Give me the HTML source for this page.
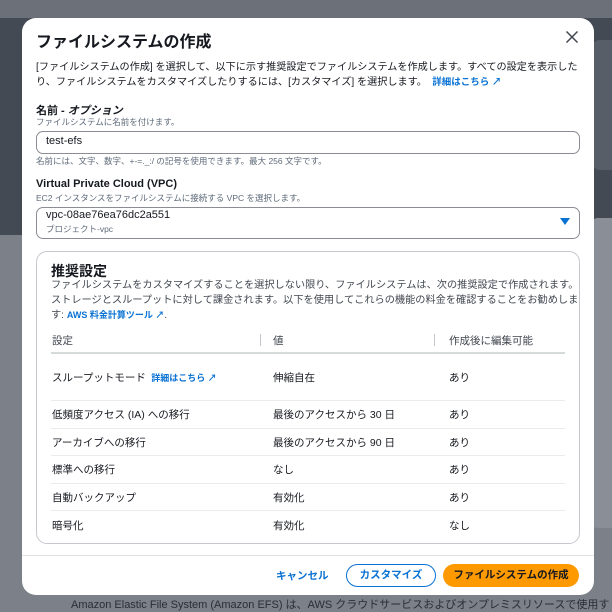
<!DOCTYPE html>
<html><head><meta charset="utf-8"><style>
*{margin:0;padding:0;box-sizing:border-box}
body{width:612px;height:610px;overflow:hidden;position:relative;background:#7b8089;font-family:"Liberation Sans","Noto Sans CJK JP",sans-serif;color:#16191f}
.a{position:absolute;white-space:nowrap}
.bgtop{position:absolute;left:0;top:0;width:612px;height:18px;background:#6c7079}
.bgdark{position:absolute;left:0;top:18px;width:612px;height:217px;background:#444a53}
.rc{position:absolute;background:#8a8f97;border-radius:8px}
.modal{position:absolute;left:22px;top:18px;width:572px;height:577px;background:#fff;border-radius:14px}
.lk{color:#0972d3;font-weight:bold}
.inp{position:absolute;border:1px solid #8c8c94;border-radius:7px;background:#fff}
.card{position:absolute;left:36px;top:251px;width:544px;height:293px;border:1px solid #c6c6cd;border-radius:11px}
.row{position:absolute;left:51px;width:514px;border-top:1px solid #e9ebed}
.t{font-size:10.5px}
</style></head><body>
<div class="bgtop"></div><div class="bgdark"></div>
<div class="rc" style="left:592px;top:40px;width:30px;height:130px;background:#585e67"></div>
<div class="rc" style="left:590px;top:218px;width:30px;height:310px"></div>
<div class="a" style="left:71px;top:596px;font-size:11px;color:#2a2e35">Amazon Elastic File System (Amazon EFS) は、AWS クラウドサービスおよびオンプレミスリソースで使用す</div>
<div class="modal"></div>
<div class="a" style="left:36px;top:28px;font-size:16px;font-weight:bold">ファイルシステムの作成</div>
<svg class="a" style="left:565px;top:30px" width="14" height="14"><path d="M1.5 1.5L12.5 12.5M12.5 1.5L1.5 12.5" stroke="#414750" stroke-width="1.5"/></svg>
<div class="a" style="left:36px;top:60px;font-size:10.15px;line-height:15px">[ファイルシステムの作成] を選択して、以下に示す推奨設定でファイルシステムを作成します。すべての設定を表示した<br>り、ファイルシステムをカスタマイズしたりするには、[カスタマイズ] を選択します。 <span class="lk" style="font-size:9.5px">&nbsp;詳細はこちら ↗</span></div>
<div class="a" style="left:36px;top:102px;font-size:11px;font-weight:bold">名前 - <i>オプション</i></div>
<div class="a" style="left:36px;top:116px;font-size:8.5px;color:#5f6b7a">ファイルシステムに名前を付けます。</div>
<div class="inp" style="left:36px;top:131px;width:544px;height:23px"></div>
<div class="a" style="left:46px;top:135px;font-size:11px">test-efs</div>
<div class="a" style="left:36px;top:155px;font-size:8.5px;color:#5f6b7a">名前には、文字、数字、+-=._:/ の記号を使用できます。最大 256 文字です。</div>
<div class="a" style="left:36px;top:178px;font-size:11px;font-weight:bold">Virtual Private Cloud (VPC)</div>
<div class="a" style="left:36px;top:192px;font-size:8.5px;color:#5f6b7a">EC2 インスタンスをファイルシステムに接続する VPC を選択します。</div>
<div class="inp" style="left:36px;top:207px;width:544px;height:32px"></div>
<div class="a" style="left:46px;top:209px;font-size:11px">vpc-08ae76ea76dc2a551</div>
<div class="a" style="left:46px;top:223px;font-size:8.5px;color:#5f6b7a">プロジェクト-vpc</div>
<svg class="a" style="left:560px;top:218px" width="10" height="8"><path d="M0 0H10L5 7Z" fill="#0972d3"/></svg>
<div class="card"></div>
<div class="a" style="left:51px;top:261px;font-size:14px;font-weight:bold">推奨設定</div>
<div class="a" style="left:51px;top:279px;font-size:10.2px;line-height:14.5px;color:#414750">ファイルシステムをカスタマイズすることを選択しない限り、ファイルシステムは、次の推奨設定で作成されます。<br>ストレージとスループットに対して課金されます。以下を使用してこれらの機能の料金を確認することをお勧めしま<br>す: <span class="lk" style="font-size:9px">AWS 料金計算ツール ↗</span>.</div>
<div class="a t" style="left:52px;top:333px;color:#414750">設定</div>
<div class="a t" style="left:273px;top:333px;color:#414750">値</div>
<div class="a t" style="left:449px;top:333px;color:#414750">作成後に編集可能</div>
<div class="a" style="left:260px;top:334px;width:1px;height:12px;background:#c6c6cd"></div>
<div class="a" style="left:434px;top:334px;width:1px;height:12px;background:#c6c6cd"></div>
<div class="row" style="top:352px;border-top:2px solid #d5dbdb"></div>
<div class="a t" style="left:52px;top:370px">スループットモード <span class="lk" style="font-size:9px">&nbsp;詳細はこちら ↗</span></div>
<div class="a t" style="left:273px;top:370px">伸縮自在</div><div class="a t" style="left:449px;top:370px">あり</div>
<div class="row" style="top:400px"></div>
<div class="a t" style="left:52px;top:407px">低頻度アクセス (IA) への移行</div>
<div class="a t" style="left:273px;top:407px">最後のアクセスから 30 日</div><div class="a t" style="left:449px;top:407px">あり</div>
<div class="row" style="top:428px"></div>
<div class="a t" style="left:52px;top:435px">アーカイブへの移行</div>
<div class="a t" style="left:273px;top:435px">最後のアクセスから 90 日</div><div class="a t" style="left:449px;top:435px">あり</div>
<div class="row" style="top:455px"></div>
<div class="a t" style="left:52px;top:462px">標準への移行</div>
<div class="a t" style="left:273px;top:462px">なし</div><div class="a t" style="left:449px;top:462px">あり</div>
<div class="row" style="top:483px"></div>
<div class="a t" style="left:52px;top:490px">自動バックアップ</div>
<div class="a t" style="left:273px;top:490px">有効化</div><div class="a t" style="left:449px;top:490px">あり</div>
<div class="row" style="top:510px"></div>
<div class="a t" style="left:52px;top:518px">暗号化</div>
<div class="a t" style="left:273px;top:518px">有効化</div><div class="a t" style="left:449px;top:518px">なし</div>
<div class="a" style="left:22px;top:555px;width:572px;height:1px;background:#e0e3e6"></div>
<div class="a lk" style="left:276px;top:568px;font-size:10.5px">キャンセル</div>
<div class="a" style="left:346px;top:564px;width:90px;height:23px;border:1.5px solid #0972d3;border-radius:12px;color:#0972d3;font-weight:bold;font-size:10.5px;text-align:center;line-height:20px">カスタマイズ</div>
<div class="a" style="left:443px;top:564px;width:136px;height:23px;background:#ff9900;border-radius:12px;color:#16191f;font-weight:bold;font-size:10.5px;text-align:center;line-height:23px">ファイルシステムの作成</div>
</body></html>
